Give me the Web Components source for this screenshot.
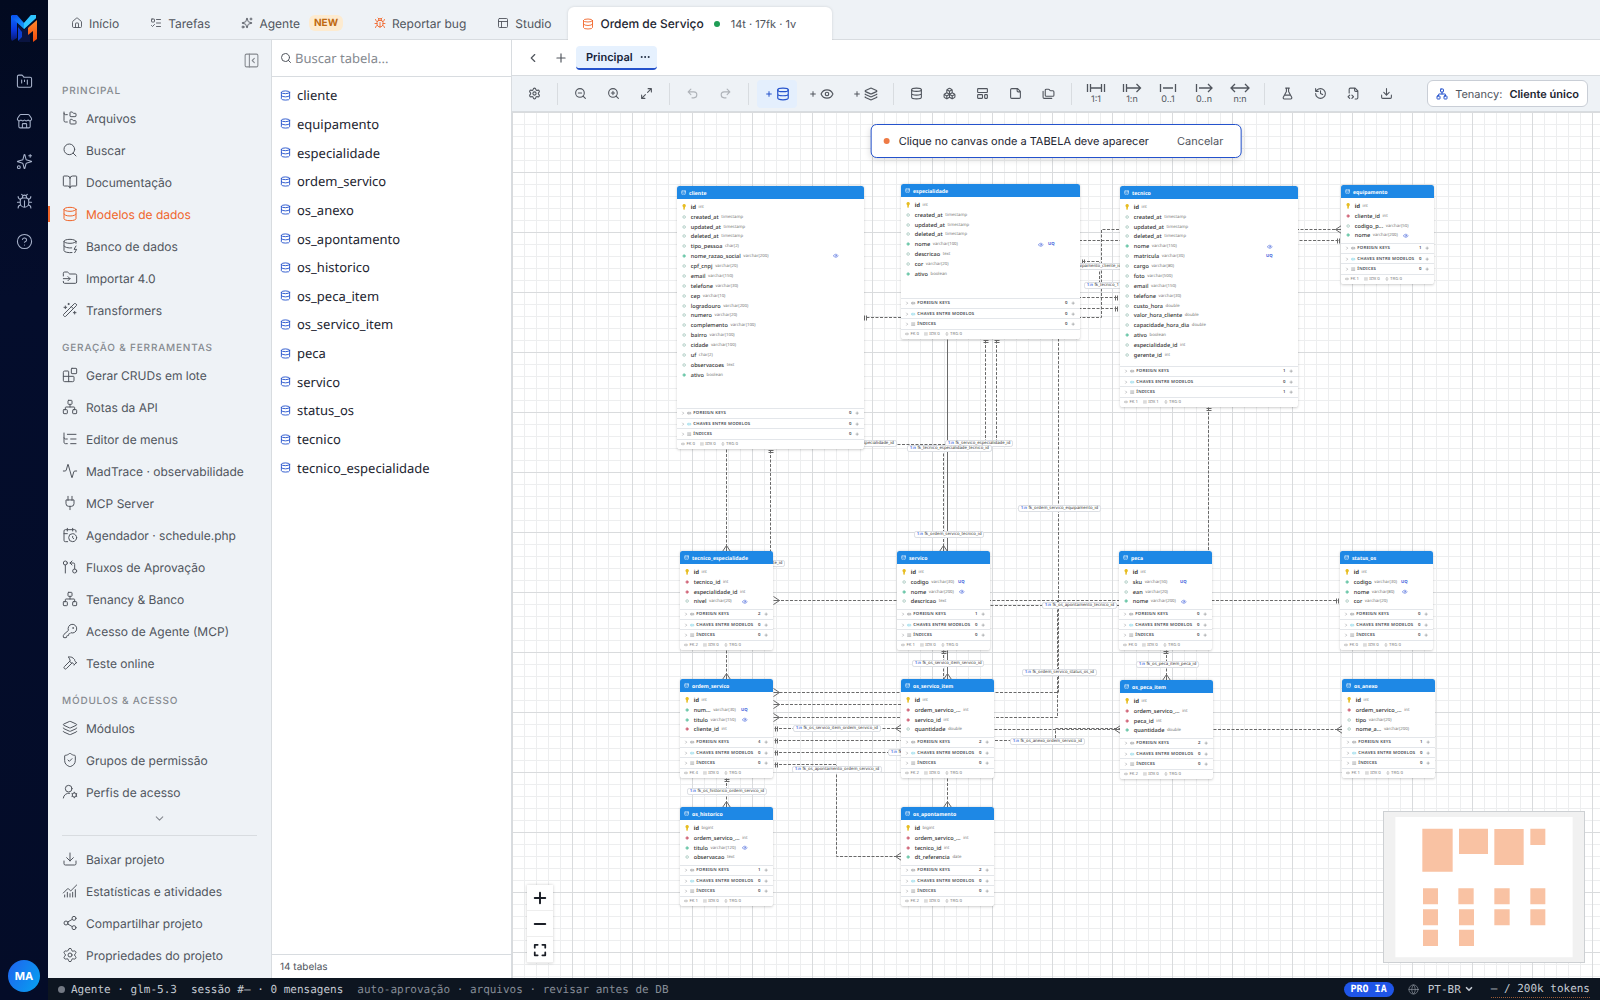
<!DOCTYPE html>
<html lang="pt-BR">
<head>
<meta charset="utf-8">
<title>Ordem de Serviço</title>
<style>
  :root{
    --ui:Inter,"Liberation Sans",sans-serif;
    --data:"Noto Sans","Open Sans",sans-serif;
    --mono:"DejaVu Sans Mono","Liberation Mono",monospace;
    --bg:#eef2f6;--line:#d8dce0;--text:#50555d;--strong:#1c2430;--muted:#85898f;
    --blue:#2452cc;--orange:#f0652a;
  }
  html,body{margin:0;height:100%}
  body{font:12px var(--ui);color:var(--text);background:#fff;text-rendering:geometricPrecision}
</style>
</head>
<body>
<app-shell></app-shell>
<script>
const base = `*{box-sizing:border-box}
button,a,input,select{font:inherit;color:inherit;background:none;border:0;padding:0;margin:0;text-decoration:none;text-rendering:inherit;letter-spacing:inherit}
ul{list-style:none;margin:0;padding:0}`;

function define(name, css, html) {
  const tpl = document.createElement('template');
  customElements.define(name, class extends HTMLElement {
    connectedCallback() {
      if (this.shadowRoot) return;
      tpl.innerHTML = `<style>${base}${css}</style>${typeof html === 'function' ? html(this) : html}`;
      this.attachShadow({mode: 'open'}).append(tpl.content.cloneNode(true));
    }
  });
}

/* ---------- icons ---------- */
const p = d => `<path d="${d}"/>`;
const cyl = '<ellipse cx="12" cy="5" rx="9" ry="3"/>';
const ICONS = {
  home: p('M15 21v-8a1 1 0 0 0-1-1h-4a1 1 0 0 0-1 1v8M3 10a2 2 0 0 1 .709-1.528l7-5.999a2 2 0 0 1 2.582 0l7 5.999A2 2 0 0 1 21 10v9a2 2 0 0 1-2 2H5a2 2 0 0 1-2-2z'),
  todo: '<rect x="3" y="4" width="6" height="6" rx="1"/>' + p('m3 17 2 2 4-4M13 5h8M13 12h8M13 19h8'),
  sparkles: p('M9.937 15.5A2 2 0 0 0 8.5 14.063l-6.135-1.582a.5.5 0 0 1 0-.962L8.5 9.936A2 2 0 0 0 9.937 8.5l1.582-6.135a.5.5 0 0 1 .963 0L14.063 8.5A2 2 0 0 0 15.5 9.937l6.135 1.581a.5.5 0 0 1 0 .964L15.5 14.063a2 2 0 0 0-1.437 1.437l-1.582 6.135a.5.5 0 0 1-.963 0zM20 2v4M22 4h-4') + '<circle cx="4" cy="20" r="2"/>',
  bug: p('m8 2 1.88 1.88M14.12 3.88 16 2M9 7.13v-1a3.003 3.003 0 1 1 6 0v1M12 20c-3.3 0-6-2.7-6-6v-3a4 4 0 0 1 4-4h4a4 4 0 0 1 4 4v3c0 3.3-2.7 6-6 6M12 20v-9M6.53 9C4.6 8.8 3 7.1 3 5M6 13H2M3 21c0-2.1 1.7-3.9 3.8-4M20.97 5c0 2.1-1.6 3.8-3.5 4M22 13h-4M17.2 17c2.1.1 3.8 1.9 3.8 4'),
  panels: '<rect x="3" y="3" width="18" height="18" rx="2"/>' + p('M3 9h18M9 21V9'),
  database: cyl + p('M3 5V19A9 3 0 0 0 21 19V5M3 12A9 3 0 0 0 21 12'),
  kanban: p('M4 20h16a2 2 0 0 0 2-2V8a2 2 0 0 0-2-2h-7.93a2 2 0 0 1-1.66-.9l-.82-1.2A2 2 0 0 0 7.93 3H4a2 2 0 0 0-2 2v13c0 1.1.9 2 2 2ZM8 10v4M12 10v2M16 10v6'),
  store: p('M15 21v-5a1 1 0 0 0-1-1h-4a1 1 0 0 0-1 1v5M17.774 10.31a1.12 1.12 0 0 0-1.549 0 2.5 2.5 0 0 1-3.451 0 1.12 1.12 0 0 0-1.548 0 2.5 2.5 0 0 1-3.452 0 1.12 1.12 0 0 0-1.549 0 2.5 2.5 0 0 1-3.77-3.248l2.889-4.184A2 2 0 0 1 7 2h10a2 2 0 0 1 1.653.873l2.895 4.192a2.5 2.5 0 0 1-3.774 3.244M4 10.95V19a2 2 0 0 0 2 2h12a2 2 0 0 0 2-2v-8.05'),
  help: '<circle cx="12" cy="12" r="10"/>' + p('M9.09 9a3 3 0 0 1 5.83 1c0 2-3 3-3 3M12 17h.01'),
  tree: p('M20 10a1 1 0 0 0 1-1V6a1 1 0 0 0-1-1h-2.5a1 1 0 0 1-.8-.4l-.9-1.2A1 1 0 0 0 15 3h-2a1 1 0 0 0-1 1v5a1 1 0 0 0 1 1ZM20 21a1 1 0 0 0 1-1v-3a1 1 0 0 0-1-1h-2.9a1 1 0 0 1-.88-.55l-.42-.85a1 1 0 0 0-.92-.6H13a1 1 0 0 0-1 1v5a1 1 0 0 0 1 1ZM3 5a2 2 0 0 0 2 2h3M3 3v13a2 2 0 0 0 2 2h3'),
  search: '<circle cx="11" cy="11" r="8"/>' + p('m21 21-4.3-4.3'),
  book: p('M12 7v14M3 18a1 1 0 0 1-1-1V4a1 1 0 0 1 1-1h5a4 4 0 0 1 4 4 4 4 0 0 1 4-4h5a1 1 0 0 1 1 1v13a1 1 0 0 1-1 1h-6a3 3 0 0 0-3 3 3 3 0 0 0-3-3z'),
  dbzap: cyl + p('M3 5V19A9 3 0 0 0 15 21.84M21 5V8M21 12 18 17H22L19 22M3 12A9 3 0 0 0 14.59 14.87'),
  input: p('M2 9V5a2 2 0 0 1 2-2h3.9a2 2 0 0 1 1.69.9l.81 1.2a2 2 0 0 0 1.67.9H20a2 2 0 0 1 2 2v10a2 2 0 0 1-2 2H4a2 2 0 0 1-2-2v-1M2 13h10M9 16l3-3-3-3'),
  wand: p('m21.64 3.64-1.28-1.28a1.21 1.21 0 0 0-1.72 0L2.36 18.64a1.21 1.21 0 0 0 0 1.72l1.28 1.28a1.2 1.2 0 0 0 1.72 0L21.64 5.36a1.2 1.2 0 0 0 0-1.72M14 7l3 3M5 6v4M19 14v4M10 2v2M7 8H3M21 16h-4M11 3H9'),
  blocks: p('M10 22V7a1 1 0 0 0-1-1H4a2 2 0 0 0-2 2v12a2 2 0 0 0 2 2h12a2 2 0 0 0 2-2v-5a1 1 0 0 0-1-1H2') + '<rect x="14" y="2" width="8" height="8" rx="1"/>',
  network: '<rect x="16" y="16" width="6" height="6" rx="1"/><rect x="2" y="16" width="6" height="6" rx="1"/><rect x="9" y="2" width="6" height="6" rx="1"/>' + p('M5 16v-3a1 1 0 0 1 1-1h12a1 1 0 0 1 1 1v3M12 12V8'),
  listtree: p('M21 12h-8M21 5H8M21 19h-8M3 3v7c0 1.1.9 2 2 2h3M3 10v7c0 1.1.9 2 2 2h3'),
  activity: p('M22 12h-2.48a2 2 0 0 0-1.93 1.46l-2.35 8.36a.25.25 0 0 1-.48 0L9.24 2.18a.25.25 0 0 0-.48 0l-2.35 8.36A2 2 0 0 1 4.49 12H2'),
  plug: p('M12 22v-5M9 8V2M15 8V2M18 8v5a4 4 0 0 1-4 4h-4a4 4 0 0 1-4-4V8Z'),
  calendar: p('M21 7.5V6a2 2 0 0 0-2-2H5a2 2 0 0 0-2 2v14a2 2 0 0 0 2 2h3.5M16 2v4M8 2v4M3 10h5M17.5 17.5 16 16.3V14') + '<circle cx="16" cy="16" r="6"/>',
  flow: '<circle cx="5" cy="6" r="3"/><circle cx="19" cy="18" r="3"/>' + p('M5 9v12M15 9l-3-3 3-3M12 6h5a2 2 0 0 1 2 2v7'),
  key: p('M2.586 17.414A2 2 0 0 0 2 18.828V21a1 1 0 0 0 1 1h3a1 1 0 0 0 1-1v-1a1 1 0 0 1 1-1h1a1 1 0 0 0 1-1v-1a1 1 0 0 1 1-1h.172a2 2 0 0 0 1.414-.586l.814-.814a6.5 6.5 0 1 0-4-4z') + '<circle cx="16.5" cy="7.5" r=".5"/>',
  hammer: p('m15 12-8.373 8.373a1 1 0 1 1-3-3L12 9M18 15l4-4M21.5 11.5l-1.914-1.914A2 2 0 0 1 19 8.172V7l-2.26-2.26a6 6 0 0 0-4.202-1.756L9 2.96l.92.82A6.18 6.18 0 0 1 12 8.4V10l2 2h1.172a2 2 0 0 1 1.414.586L18.5 14.5'),
  layers: p('M12.83 2.18a2 2 0 0 0-1.66 0L2.6 6.08a1 1 0 0 0 0 1.83l8.58 3.91a2 2 0 0 0 1.66 0l8.58-3.9a1 1 0 0 0 0-1.83zM2 12a1 1 0 0 0 .58.91l8.6 3.91a2 2 0 0 0 1.65 0l8.58-3.9A1 1 0 0 0 22 12M2 17a1 1 0 0 0 .58.91l8.6 3.91a2 2 0 0 0 1.65 0l8.58-3.9A1 1 0 0 0 22 17'),
  shield: p('M20 13c0 5-3.5 7.5-7.66 8.95a1 1 0 0 1-.67-.01C7.5 20.5 4 18 4 13V6a1 1 0 0 1 1-1c2 0 4.5-1.2 6.24-2.72a1.17 1.17 0 0 1 1.52 0C14.51 3.81 17 5 19 5a1 1 0 0 1 1 1zM9 12l2 2 4-4'),
  usercog: '<circle cx="10" cy="7" r="5"/><circle cx="18.5" cy="16.5" r="3.2"/>' + p('M2 21a8 8 0 0 1 9.5-7.2M18.500 12.300v1M18.500 19.700v1M14.900 14.400l.9.5M21.300 18.100l.9.5M14.900 18.600l.9-.5M21.300 14.900l.9-.5'),
  download: p('M12 15V3M21 15v4a2 2 0 0 1-2 2H5a2 2 0 0 1-2-2v-4M7 10l5 5 5-5'),
  chart: p('M12 16v5M16 14v7M20 10v11M22 3l-8.646 8.646a.5.5 0 0 1-.708 0L9.354 8.354a.5.5 0 0 0-.707 0L2 15M4 18v3M8 14v7'),
  share: '<circle cx="18" cy="5" r="3"/><circle cx="6" cy="12" r="3"/><circle cx="18" cy="19" r="3"/>' + p('m8.59 13.51 6.83 3.98M15.41 6.51l-6.82 3.98'),
  gear: p('M9.671 4.136a2.34 2.34 0 0 1 4.659 0 2.34 2.34 0 0 0 3.319 1.915 2.34 2.34 0 0 1 2.33 4.033 2.34 2.34 0 0 0 0 3.831 2.34 2.34 0 0 1-2.33 4.033 2.34 2.34 0 0 0-3.319 1.915 2.34 2.34 0 0 1-4.659 0 2.34 2.34 0 0 0-3.32-1.915 2.34 2.34 0 0 1-2.33-4.033 2.34 2.34 0 0 0 0-3.831A2.34 2.34 0 0 1 6.35 6.051a2.34 2.34 0 0 0 3.319-1.915') + '<circle cx="12" cy="12" r="3"/>',
  collapse: '<rect x="3" y="3" width="18" height="18" rx="2"/>' + p('M9 3v18M16 15l-3-3 3-3'),
  down: p('m6 9 6 6 6-6'), left: p('m15 18-6-6 6-6'), right: p('m9 18 6-6-6-6'),
  plus: p('M5 12h14M12 5v14'), minus: p('M5 12h14'),
  dots: '<circle cx="12" cy="12" r="1"/><circle cx="19" cy="12" r="1"/><circle cx="5" cy="12" r="1"/>',
  zoomout: '<circle cx="11" cy="11" r="8"/>' + p('m21 21-4.3-4.3M8 11h6'),
  zoomin: '<circle cx="11" cy="11" r="8"/>' + p('m21 21-4.3-4.3M8 11h6M11 8v6'),
  expand: p('M15 3h6v6M9 21H3v-6M21 3l-7 7M3 21l7-7'),
  undo: p('M9 14 4 9l5-5M4 9h10.500a5.500 5.500 0 0 1 0 11H11'),
  redo: p('m15 14 5-5-5-5M20 9H9.500a5.500 5.500 0 0 0 0 11H13'),
  eye: p('M2.062 12.348a1 1 0 0 1 0-.696 10.75 10.75 0 0 1 19.876 0 1 1 0 0 1 0 .696 10.75 10.75 0 0 1-19.876 0') + '<circle cx="12" cy="12" r="3"/>',
  boxes: p('M2.97 12.92A2 2 0 0 0 2 14.63v3.24a2 2 0 0 0 .97 1.71l3 1.8a2 2 0 0 0 2.06 0L12 19v-5.5l-5-3-4.03 2.42ZM7 16.5l-4.74-2.85M7 16.5l5-3M7 16.5v5.17M12 13.5V19l3.97 2.38a2 2 0 0 0 2.06 0l3-1.8a2 2 0 0 0 .97-1.71v-3.24a2 2 0 0 0-.97-1.71L17 10.5l-5 3ZM17 16.5l-5-3M17 16.5l4.74-2.85M17 16.5v5.17M7.97 4.42A2 2 0 0 0 7 6.13v4.37l5 3 5-3V6.13a2 2 0 0 0-.97-1.71l-3-1.8a2 2 0 0 0-2.06 0l-3 1.8ZM12 8 7.26 5.15M12 8l4.74-2.85M12 13.5V8'),
  template: '<rect x="3" y="3" width="18" height="7" rx="1"/><rect x="3" y="14" width="9" height="7" rx="1"/><rect x="16" y="14" width="5" height="7" rx="1"/>',
  note: p('M16 3H5a2 2 0 0 0-2 2v14a2 2 0 0 0 2 2h14a2 2 0 0 0 2-2V8ZM15 3v4a2 2 0 0 0 2 2h4'),
  folders: p('M20 17a2 2 0 0 0 2-2V9a2 2 0 0 0-2-2h-3.9a2 2 0 0 1-1.69-.9l-.81-1.2a2 2 0 0 0-1.67-.9H8a2 2 0 0 0-2 2v9a2 2 0 0 0 2 2ZM2 8v11a2 2 0 0 0 2 2h14'),
  flask: p('M14 2v6a2 2 0 0 0 .245.96l5.51 10.08A2 2 0 0 1 18 22H6a2 2 0 0 1-1.755-2.96l5.51-10.08A2 2 0 0 0 10 8V2M6.453 15h11.094M8.5 2h7'),
  history: p('M3 12a9 9 0 1 0 9-9 9.75 9.75 0 0 0-6.74 2.74L3 8M3 3v5h5M12 7v5l4 2'),
  filecode: p('M4 11V4a2 2 0 0 1 2-2h9l5 5v13a2 2 0 0 1-2 2h-3M14 2v4a2 2 0 0 0 2 2h4M5 15l-3 3 3 3M9 21l3-3-3-3'),
  globe: '<circle cx="12" cy="12" r="10"/>' + p('M12 2a14.5 14.5 0 0 0 0 20 14.5 14.5 0 0 0 0-20M2 12h20'),
  fit: p('M3 8V3h5M16 3h5v5M21 16v5h-5M8 21H3v-5'),
  link: p('M9 17H7A5 5 0 0 1 7 7h2M15 7h2a5 5 0 1 1 0 10h-2M8 12h8'),
  list: p('M3 5h.01M3 12h.01M3 19h.01M8 5h13M8 12h13M8 19h13'),
  bolt: p('M12 3v18M6 9l6-6 6 6M6 15l6 6 6-6')
};
define('ui-icon', `:host{display:inline-flex;flex:none;width:var(--s,16px);height:var(--s,16px)}
svg{width:100%;height:100%;fill:none;stroke:currentColor;stroke-width:var(--w,1.5);stroke-linecap:round;stroke-linejoin:round}`,
  el => `<svg viewBox="0 0 24 24" aria-hidden="true">${ICONS[el.getAttribute('name')]}</svg>`);
const icon = n => `<ui-icon name="${n}"></ui-icon>`;

/* ---------- left rail ---------- */
define('app-rail', `:host{display:flex;flex-direction:column;align-items:center;width:48px;padding:12px 0 8px;background:linear-gradient(#020a20,#040d2c 30%,#040c28);color:#a9b4cc}
.logo{width:28px;height:32px}
nav{display:flex;flex-direction:column;gap:23px;margin-top:29px;flex:1}
a{display:flex;--s:17px}
button{width:32px;height:32px;border-radius:50%;background:linear-gradient(120deg,#1f62ee,#06a3f0);color:#fff;font:700 11px var(--ui)}`,
`<svg class="logo" viewBox="0 0 28 32" aria-label="Mad">
<defs><linearGradient id="a" x1="0" y1="0" x2="0" y2="1"><stop stop-color="#0b6cff"/><stop offset=".6" stop-color="#0a35d8"/><stop offset="1" stop-color="#0a1a70"/></linearGradient>
<linearGradient id="b" x1="0" y1="0" x2="1" y2="1"><stop stop-color="#0a4bf0"/><stop offset="1" stop-color="#19c4ff"/></linearGradient>
<linearGradient id="c" x1="0" y1="0" x2="0" y2="1"><stop stop-color="#ff8a2a"/><stop offset="1" stop-color="#f0480c"/></linearGradient></defs>
<path fill="url(#a)" d="M1 3 7 9v17l-5 3-1-2z"/><path fill="#0a1440" d="m8 12 6 6 6-6v18H9z"/>
<path fill="#0d3fd0" d="m8 15 4 5v5l-4 4z"/>
<path fill="url(#b)" d="M2 3h5l7 8 7-8h5v3L14 17 2 6z"/><path fill="#37d3ff" d="m14 11 7-8h5v3L14 17z" opacity=".8"/>
<path fill="url(#c)" d="m20 14 7-6v19l-4 3v-11l-5 4v-7z"/></svg>
<nav aria-label="Atalhos">${[['kanban', 'Projetos'], ['store', 'Loja'], ['sparkles', 'IA'], ['bug', 'Bugs'], ['help', 'Ajuda']].map(([i, t]) => `<a href="#" aria-label="${t}">${icon(i)}</a>`).join('')}</nav>
<button type="button">MA</button>`);

/* ---------- project tabs ---------- */
define('tab-item', `:host{display:flex;align-items:center;height:32px;padding:0 14px}
:host([active]){background:#fff;border-radius:6px 6px 0 0;box-shadow:0 0 3px #0002;clip-path:inset(-4px -4px 0 -4px);padding-right:36px;color:var(--strong);font-weight:500}
a{display:flex;align-items:center;gap:6px;white-space:nowrap}
ui-icon{--s:12px;--w:1.8;color:var(--ic,inherit)}`,
  el => `<a href="#">${icon(el.getAttribute('icon'))}<slot></slot></a>`);
define('project-tabs', `:host{display:flex;align-items:flex-end;gap:3px;height:40px;padding:0 9px;background:var(--bg);border-bottom:1px solid var(--line)}
.hot{--ic:var(--orange)}
.new{margin-left:3px;padding:2px 5px;border-radius:6px;background:#fdebd0;color:#c06a10;font:700 10px/12px var(--ui)}
i{width:6px;height:6px;border-radius:50%;background:#1f9d55;margin:0 5px 0 4px}
small{font:400 11px var(--ui);color:var(--text)}
tab-item[active]{position:relative;margin-bottom:-1px;height:33px}`,
`<tab-item icon="home">Início</tab-item><tab-item icon="todo">Tarefas</tab-item>
<tab-item icon="sparkles">Agente<span class="new">NEW</span></tab-item>
<tab-item class="hot" icon="bug">Reportar bug</tab-item><tab-item icon="panels">Studio</tab-item>
<tab-item class="hot" icon="database" active>Ordem de Serviço<i></i><small>14t · 17fk · 1v</small></tab-item>`);

/* ---------- side menu ---------- */
define('menu-link', `:host{display:block}
a{display:flex;align-items:center;gap:8px;height:32px;padding-left:14px;white-space:nowrap}
:host([active]) a{color:var(--orange);background:linear-gradient(var(--orange),var(--orange)) 0 50%/2px 16px no-repeat}`,
  el => `<a href="#">${icon(el.getAttribute('icon'))}<slot></slot></a>`);
const links = a => a.map(([i, t, on]) => `<menu-link icon="${i}"${on ? ' active' : ''}>${t}</menu-link>`).join('');
define('side-menu', `:host{display:flex;flex-direction:column;width:224px;background:var(--bg);border-right:1px solid var(--line)}
.top{display:flex;justify-content:flex-end;padding:12px 11px 0 0;color:var(--muted)}
.top button{display:flex;--s:17px}
h2{margin:0;padding:15px 14px 3px;font:500 10px/15px var(--ui);letter-spacing:.08em;color:var(--muted)}
nav{flex:1}
.more{display:flex;width:100%;justify-content:center;padding-top:4px;--s:13px;--w:2;color:var(--muted)}
.foot{margin:0 14px;border-top:1px solid var(--line);height:8px}
.end{padding-bottom:7px}`,
`<div class="top"><button type="button" aria-label="Recolher menu">${icon('collapse')}</button></div>
<nav><h2>PRINCIPAL</h2>${links([['tree', 'Arquivos'], ['search', 'Buscar'], ['book', 'Documentação'], ['database', 'Modelos de dados', 1], ['dbzap', 'Banco de dados'], ['input', 'Importar 4.0'], ['wand', 'Transformers']])}
<h2>GERAÇÃO &amp; FERRAMENTAS</h2>${links([['blocks', 'Gerar CRUDs em lote'], ['network', 'Rotas da API'], ['listtree', 'Editor de menus'], ['activity', 'MadTrace · observabilidade'], ['plug', 'MCP Server'], ['calendar', 'Agendador · schedule.php'], ['flow', 'Fluxos de Aprovação'], ['network', 'Tenancy &amp; Banco'], ['key', 'Acesso de Agente (MCP)'], ['hammer', 'Teste online']])}
<h2>MÓDULOS &amp; ACESSO</h2>${links([['layers', 'Módulos'], ['shield', 'Grupos de permissão'], ['usercog', 'Perfis de acesso']])}
<button class="more" type="button" aria-label="Mais itens">${icon('down')}</button></nav>
<div class="foot"></div><div class="end">${links([['download', 'Baixar projeto'], ['chart', 'Estatísticas e atividades'], ['share', 'Compartilhar projeto'], ['gear', 'Propriedades do projeto']])}</div>`);

/* ---------- table list ---------- */
const NAMES = 'cliente equipamento especialidade ordem_servico os_anexo os_apontamento os_historico os_peca_item os_servico_item peca servico status_os tecnico tecnico_especialidade'.split(' ');
define('table-list', `:host{display:flex;flex-direction:column;width:240px;background:#fff;border-right:1px solid var(--line);font:13px var(--data);color:var(--strong)}
label{display:flex;align-items:center;gap:3px;height:37px;padding:0 8px;border-bottom:1px solid var(--line);color:var(--text);--s:12px;--w:2}
input{flex:1;min-width:0;outline:0}
input::placeholder{color:var(--muted);opacity:1}
ul{display:grid;grid-auto-rows:1fr;height:401px;margin-top:4px}
li{display:flex}
li button{display:flex;align-items:center;gap:6px;width:100%;padding:0 8px;--s:11px;--w:2}
ui-icon{color:var(--blue)} label ui-icon{color:inherit}
footer{height:24px;margin-top:auto;padding:0 8px;border-top:1px solid var(--line);font:10px/24px var(--ui);color:var(--text)}`,
`<label>${icon('search')}<input type="search" aria-label="Buscar tabela" placeholder="Buscar tabela..."></label>
<ul>${NAMES.map(n => `<li><button type="button">${icon('database')}${n}</button></li>`).join('')}</ul>
<footer>14 tabelas</footer>`);

/* ---------- diagram views and toolbar ---------- */
define('view-tabs', `:host{display:flex;align-items:center;height:36px;padding:0 7px;background:#fff;border-bottom:1px solid var(--line)}
button{display:flex;align-items:center;justify-content:center}
.sq{width:28px;height:28px;--s:14px;--w:2}
.tab{gap:6px;height:24px;margin-left:1px;padding:0 6px 0 10px;border-radius:4px;border-bottom:2px solid var(--blue);background:#e6f1fe;color:#16233a;font:600 11px var(--ui);--s:12px;--w:2}`,
`<button class="sq" type="button" aria-label="Anterior">${icon('left')}</button><button class="sq" type="button" aria-label="Nova visão">${icon('plus')}</button>
<button class="tab" type="button">Principal${icon('dots')}</button>`);

const rel = d => `<svg viewBox="0 0 20 10" aria-hidden="true"><path d="${d}"/></svg>`;
const RELS = [['1:1', 'M1.500 1v8M4.500 1v8M4.500 5h11M15.500 1v8M18.500 1v8'], ['1:n', 'M1.500 1v8M4.500 1v8M4.500 5h14M14.500 1l4 4-4 4'], ['0..1', 'M2.500 1v8M5 5h10M17.500 1v8'], ['0..n', 'M2.500 1v8M5 5h13M14 1l4 4-4 4'], ['n:n', 'M1 5h18M5 1 1 5l4 4M15 1l4 4-4 4']];
const tb = (i, t, c = '') => `<button type="button" class="${c}" aria-label="${t}">${icon(i)}</button>`;
const add = (i, t, c = '') => `<button type="button" class="add ${c}" aria-label="${t}"><ui-icon class="p" name="plus"></ui-icon>${icon(i)}</button>`;
define('diagram-toolbar', `:host{display:flex;align-items:center;height:36px;padding:0 12px 0 6px;background:var(--bg);border-bottom:1px solid var(--line)}
button{display:flex;align-items:center;justify-content:center;width:33px;height:28px;--s:13px;--w:2}
hr{width:1px;height:22px;margin:0 6px;border:0;background:var(--line)}
.off{opacity:.4}
.add{width:40px;margin:0 2px;gap:3px;border-radius:4px}
.add ui-icon{--s:14px}.add ui-icon.p{--s:8px;--w:3}
.on{background:#e4effd;color:var(--blue)}
.rel{flex-direction:column;width:36px;font:9px/11px var(--ui);gap:1px}
.rel svg{width:20px;height:10px;fill:none;stroke:currentColor;stroke-width:1.3}
.ten{width:auto;height:27px;margin-left:auto;padding:0 8px;gap:7px;border:1px solid #c9ced6;border-radius:6px;background:#fff;font:11px var(--ui);--s:12px}
.ten ui-icon{color:var(--blue)} b{font-weight:600;color:var(--strong)}`,
`${tb('gear', 'Configurar')}<hr>${tb('zoomout', 'Diminuir')}${tb('zoomin', 'Aumentar')}${tb('expand', 'Ajustar')}<hr>
${tb('undo', 'Desfazer', 'off')}${tb('redo', 'Refazer', 'off')}<hr>${add('database', 'Nova tabela', 'on')}${add('eye', 'Nova view')}${add('layers', 'Novo grupo')}<hr>
${tb('database', 'Banco')}${tb('boxes', 'Módulos')}${tb('template', 'Layout')}${tb('note', 'Nota')}${tb('folders', 'Modelos')}<hr>
${RELS.map(([t, d]) => `<button type="button" class="rel">${rel(d)}<span>${t}</span></button>`).join('')}<hr>
${tb('flask', 'Testar')}${tb('history', 'Histórico')}${tb('filecode', 'Gerar código')}${tb('download', 'Exportar')}
<button type="button" class="ten">${icon('network')}<span>Tenancy:</span><b>Cliente único</b></button>`);

/* ---------- ER tables: fields are "kind name type badges" ---------- */
const T = {
  cliente: {at: [677, 186, 187, 263], n: [0, 0, 0], f: 'k id int|o created_at timestamp|o updated_at timestamp|o deleted_at timestamp|o tipo_pessoa char(2)|g nome_razao_social varchar(200) eye|o cpf_cnpj varchar(20)|o email varchar(150)|o telefone varchar(30)|o cep varchar(10)|o logradouro varchar(200)|o numero varchar(20)|o complemento varchar(100)|o bairro varchar(100)|o cidade varchar(100)|o uf char(2)|o observacoes text|g ativo boolean'},
  especialidade: {at: [901, 184, 179, 155], n: [0, 0, 0], f: 'k id int|o created_at timestamp|o updated_at timestamp|o deleted_at timestamp|g nome varchar(100) eye UQ|o descricao text|o cor varchar(20)|g ativo boolean'},
  tecnico: {at: [1120, 186, 178, 221], n: [1, 0, 1], f: 'k id int|o created_at timestamp|o updated_at timestamp|o deleted_at timestamp|g nome varchar(150) eye|o matricula varchar(30) UQ|o cargo varchar(80)|o foto varchar(500)|o email varchar(150)|o telefone varchar(30)|o custo_hora double|o valor_hora_cliente double|o capacidade_hora_dia double|g ativo boolean|o especialidade_id int|o gerente_id int'},
  equipamento: {at: [1341, 185, 93, 99], n: [1, 0, 0], f: 'k id int|r cliente_id int|o codigo_p... varchar(50)|g nome varchar(200) eye'},
  tecnico_especialidade: {at: [680, 551, 93, 99], n: [2, 0, 0], f: 'k id int|r tecnico_id int|r especialidade_id int|o nivel varchar(20) eye'},
  servico: {at: [897, 551, 93, 99], n: [1, 0, 0], f: 'k id int|o codigo varchar(30) UQ|g nome varchar(200) eye|o descricao text'},
  peca: {at: [1119, 551, 93, 99], n: [0, 0, 0], f: 'k id int|o sku varchar(50) UQ|o ean varchar(20)|g nome varchar(200) eye'},
  status_os: {at: [1340, 551, 93, 99], n: [0, 0, 0], f: 'k id int|g codigo varchar(30) UQ|g nome varchar(80) eye|o cor varchar(20)'},
  ordem_servico: {at: [680, 679, 93, 99], n: [4, 0, 0], f: 'k id int|g num... varchar(30) UQ|g titulo varchar(150) eye|r cliente_id int'},
  os_servico_item: {at: [901, 679, 93, 99], n: [2, 0, 0], f: 'k id int|r ordem_servico_... int|r servico_id int|o quantidade double'},
  os_peca_item: {at: [1120, 680, 93, 99], n: [2, 0, 0], f: 'k id int|r ordem_servico_... int|r peca_id int|g quantidade double'},
  os_anexo: {at: [1342, 679, 93, 99], n: [1, 0, 0], f: 'k id int|r ordem_servico_... int|o tipo varchar(20)|o nome_a... varchar(200)'},
  os_historico: {at: [680, 807, 93, 99], n: [1, 0, 0], f: 'k id bigint|r ordem_servico_... int|g titulo varchar(120) eye|o observacao text'},
  os_apontamento: {at: [901, 807, 93, 99], n: [2, 0, 0], f: 'k id bigint|r ordem_servico_... int|r tecnico_id int|g dt_referencia date'}
};
const mark = {
  k: '<svg viewBox="0 0 10 14"><path fill="#e7bd22" d="M5 0a4 4 0 0 1 2 7.400V9L6 10l1 1-1 1v1l-1 1-2-2V7.400A4 4 0 0 1 5 0z"/></svg>',
  o: '<svg viewBox="0 0 10 10"><circle cx="5" cy="5" r="3" fill="#fff" stroke="#8fb9ac" stroke-width="1.500"/></svg>',
  g: '<svg viewBox="0 0 10 10"><circle cx="5" cy="5" r="3" fill="#5cc3a0" stroke="#8fd3bd" stroke-width="2"/></svg>',
  r: '<svg viewBox="0 0 10 10"><circle cx="5" cy="5" r="3" fill="#cc4a62" stroke="#dd95a3" stroke-width="2"/></svg>'
};
define('er-table', `:host{position:absolute;display:block}
section{zoom:.43;display:flex;flex-direction:column;width:100%;height:100%;overflow:hidden;background:#fff;border-radius:6px;box-shadow:0 1px 6px #0003;font:13px var(--data);color:#333}
h3{display:flex;align-items:center;gap:6px;height:31px;flex:none;margin:0;padding:0 10px;background:#1e88e5;color:#fff;font:700 12px var(--data);--s:12px;--w:2}
ul{flex:1;padding-top:6px}
li{display:flex;align-items:center;gap:6px;height:23px;padding:0 59px 0 12px;white-space:nowrap}
li>svg{width:10px;height:14px;margin-right:4px;flex:none}
li small{font-size:10px;color:#777} .k b{font-weight:700} b{font-weight:500}
.tag{display:flex;align-items:center;gap:10px;margin-left:auto;color:#3f5fdc;font:700 10px var(--data);--s:13px;--w:2}
.sec{display:flex;align-items:center;gap:4px;height:24px;flex:none;width:100%;padding:0 10px;border-top:1px solid #e3e6ea;font:600 10px var(--data);letter-spacing:.05em;color:#4c4f55;white-space:nowrap;--s:10px;--w:2}
.sec .n{margin-left:auto;margin-right:5px;letter-spacing:0}
.cyan{color:#32b8d8}
footer{display:flex;gap:12px;height:24px;flex:none;padding:0 10px;align-items:center;border-top:1px solid #e3e6ea;font:10px var(--data);color:#777;--s:9px;--w:2}
footer span{display:flex;align-items:center;gap:3px;white-space:nowrap}`,
  el => {
    const name = el.getAttribute('name'), t = T[name];
    const row = r => {
      const [k, n, ty, ...b] = r.split(' ');
      return `<li class="${k}">${mark[k]}<b>${n}</b><small>${ty}</small>${b.length ? `<span class="tag">${b.map(x => x === 'eye' ? icon('eye') : x).join('')}</span>` : ''}</li>`;
    };
    const sec = (i, c, s, n) => `<button type="button" class="sec">${icon('right')}<ui-icon name="${i}" class="${c}"></ui-icon>${s}<span class="n">${n}</span>${icon('plus')}</button>`;
    return `<section><h3>${icon('database')}${name}</h3><ul>${t.f.split('|').map(row).join('')}</ul>
${sec('link', '', 'FOREIGN KEYS', t.n[0])}${sec('link', 'cyan', 'CHAVES ENTRE MODELOS', t.n[1])}${sec('list', '', 'ÍNDICES', t.n[2])}
<footer><span>${icon('link')}FK ${t.n[0]}</span><span>${icon('list')}IDX ${t.n[2]}</span><span>${icon('bolt')}TRG 0</span></footer></section>`;
  });

/* ---------- relation lines ---------- */
const LINES = ['M866 317H1101V229H1341', 'M1338 240H1058V692H776', 'M1082 261H1099V282', 'M947 297H1118', 'M943 308H1118',
  'M985 340V444H863', 'M996 340V444', 'M943 444V551', 'M726 449V551', 'M770 450V563', 'M776 600H1058', 'M1058 600H1338', 'M990 605H1119',
  'M1057 600V717H776', 'M776 704H901', 'M774 728H901', 'M774 740H1055V729', 'M774 752H901', 'M774 764H836V856H901',
  'M994 729H1120', 'M1055 728H1120', 'M1213 729H1342', 'M726 650V679', 'M726 778V807', 'M943 650V679', 'M947 778V807', 'M1208 407V551', 'M1166 650V680'];
const FEET = [[1341, 229, 'l'], [726, 551, 't'], [943, 551, 't'], [773, 600, 'r'], [726, 679, 't'], [947, 679, 't'], [773, 692, 'r'], [773, 704, 'r'], [773, 717, 'r'],
  [901, 728, 'l'], [901, 856, 'l'], [1120, 729, 'l'], [1342, 729, 'l'], [1166, 680, 't'], [726, 807, 't'], [947, 807, 't']];
const BARS = [[865, 317, 'v'], [1338, 240, 'v'], [1083, 261, 'v'], [1116, 297, 'v'], [1116, 308, 'v'], [1337, 600, 'v'], [776, 728, 'v'], [776, 740, 'v'], [776, 752, 'v'], [776, 764, 'v'],
  [985, 340, 'h'], [996, 340, 'h'], [770, 450, 'h'], [943, 651, 'h'], [726, 779, 'h'], [1208, 408, 'h'], [1165, 651, 'h']];
const foot = ([x, y, d]) => d === 't' ? `M${x} ${y - 6}l-4 6M${x} ${y - 6}v6M${x} ${y - 6}l4 6` : d === 'r' ? `M${x + 6} ${y}l-6-4M${x + 6} ${y}h-6M${x + 6} ${y}l-6 4` : `M${x - 6} ${y}l6-4M${x - 6} ${y}h6M${x - 6} ${y}l6 4`;
const bar = ([x, y, d]) => d === 'v' ? `M${x - 1} ${y - 2}v5M${x + 1} ${y - 2}v5` : `M${x - 2} ${y}h5M${x - 2} ${y + 2}h5`;
define('er-edges', `:host{position:absolute;inset:0}svg{display:block;width:100%;height:100%;fill:none;stroke:#6a6a6a;stroke-width:1}`,
`<svg aria-hidden="true"><g transform="translate(-511.5 -111.5)"><path stroke-dasharray="3 1.5" d="${LINES.join('')}"/>
<path d="M947 339V551M947 650V679"/><path d="${FEET.map(foot).join('')}${BARS.map(bar).join('')}"/></g></svg>`);

define('er-label', `:host{position:absolute;display:block}
span{zoom:.43;display:flex;align-items:center;gap:3px;height:16px;padding:0 4px;border:1px solid #dcdfe4;border-radius:5px;background:#fff;font:10px var(--data);color:#333;white-space:nowrap}
b{color:#3f5fdc;font-weight:600}`, `<span><b>1:n</b><slot></slot></span>`);
const LABELS = [[1057, 263, 'fk_equipamento_cliente_id'], [1084, 282, 'fk_tecnico_1'], [799, 440, 'fk_tecnico_especialidade_especialidade_id'], [945, 440, 'fk_servico_especialidade_id'], [907, 445, 'fk_tecnico_especialidade_tecnico_id'],
  [1018, 505, 'fk_ordem_servico_equipamento_id'], [914, 531, 'fk_ordem_servico_tecnico_id'], [716, 560, 'fk_ordem_servico_cliente_id'], [1042, 602, 'fk_os_apontamento_tecnico_id'],
  [912, 660, 'fk_os_servico_item_servico_id'], [1136, 661, 'fk_os_peca_item_peca_id'], [1022, 669, 'fk_ordem_servico_status_os_id'], [793, 725, 'fk_os_servico_item_ordem_servico_id'], [1010, 738, 'fk_os_anexo_ordem_servico_id'],
  [888, 749, 'fk_os_peca_item_ordem_servico_id'], [792, 766, 'fk_os_apontamento_ordem_servico_id'], [687, 788, 'fk_os_historico_ordem_servico_id']];

define('mini-map', `:host{display:block;border:1px solid #cdd0d3;background:#f1f1f1}svg{display:block}`,
`<svg width="200" height="150" viewBox="852 65 600 450" aria-label="Mini mapa"><path fill="#fff" d="M886 80h532v421H886z"/><path fill="#f9c2a3" d="M967 115h91v129h-91zM1077 115h87v76h-87zM1183 116h88v108h-88zM1291 115h45v49h-45zM969 294h45v48h-45zM1075 294h46v48h-46zM1183 294h46v48h-46zM1291 294h45v48h-45zM969 357h45v48h-45zM1077 357h45v48h-45zM1183 357h46v48h-46zM1291 357h45v48h-45zM969 418h45v49h-45zM1077 418h45v49h-45z"/></svg>`);

define('zoom-controls', `:host{display:flex;flex-direction:column;box-shadow:0 0 3px #0003;background:#fff}
button{display:flex;align-items:center;justify-content:center;width:26px;height:26px;border-bottom:1px solid #eee;color:#1b1f27;--s:18px;--w:2.6}
.fit{--s:14px;--w:3}`,
`<button type="button" aria-label="Aumentar zoom">${icon('plus')}</button><button type="button" aria-label="Diminuir zoom">${icon('minus')}</button><button class="fit" type="button" aria-label="Enquadrar"><ui-icon name="fit"></ui-icon></button>`);

define('place-hint', `:host{display:flex;align-items:center;height:34px;padding:0 17px 0 12px;border:1px solid var(--blue);border-radius:6px;background:#fff;box-shadow:0 2px 6px #0002;font:11px var(--ui);color:var(--strong);white-space:nowrap}
i{width:6px;height:6px;border-radius:50%;background:#ee7a45;margin-right:9px}
button{margin-left:28px;font-size:11px;color:var(--text)}`,
`<i></i>Clique no canvas onde a TABELA deve aparecer<button type="button">Cancelar</button>`);

define('er-canvas', `:host{position:relative;display:block;flex:1;overflow:hidden;background-color:#fff;
background-image:linear-gradient(90deg,#d9dbdd 1px,transparent 1px),linear-gradient(#d9dbdd 1px,transparent 1px),linear-gradient(90deg,#edeeef 1px,transparent 1px),linear-gradient(#edeeef 1px,transparent 1px);
background-size:60px 60px,60px 60px,12px 12px,12px 12px}
place-hint{position:absolute;top:12px;left:50%;transform:translateX(-50%)}
zoom-controls{position:absolute;left:15px;bottom:15px}
mini-map{position:absolute;right:15px;bottom:15px}`,
`<er-edges></er-edges>${LABELS.map(([x, y, t]) => `<er-label style="left:${x - 512}px;top:${y - 112}px">${t}</er-label>`).join('')}
${Object.entries(T).map(([n, {at: [x, y, w, h]}]) => `<er-table name="${n}" style="left:${x - 512}px;top:${y - 112}px;width:${w}px;height:${h}px"></er-table>`).join('')}
<place-hint></place-hint><zoom-controls></zoom-controls><mini-map></mini-map>`);

/* ---------- status bar ---------- */
define('status-bar', `:host{display:flex;align-items:center;gap:14px;height:22px;padding:0 10px;background:#0d1520;color:#c3c9d1;font:11px var(--mono);white-space:nowrap}
.ag{display:flex;align-items:center;gap:6px}.ag i{width:7px;height:7px;border-radius:50%;background:#737983}
.dim{color:#858c96}
.pro{margin-left:auto;padding:0 7px;border-radius:8px;background:#1f55e8;color:#fff;font:700 10px/15px var(--mono)}
label{display:flex;align-items:center;--s:11px}
label>:first-child{margin-right:9px;color:#8b929c}
select{appearance:none;width:36px;outline:0}
label>:last-child{--w:4;--s:10px}
.tok{border-bottom:1px dotted #9a5a35;line-height:16px;margin-left:3px}`,
`<span class="ag"><i></i>Agente · glm-5.3</span><span>sessão #— · 0 mensagens</span><span class="dim">auto-aprovação · arquivos · revisar antes de DB</span>
<span class="pro">PRO IA</span><label>${icon('globe')}<select aria-label="Idioma"><option>PT-BR</option></select>${icon('down')}</label><span class="tok">— / 200k tokens</span>`);

define('app-shell', `:host{display:flex;height:100vh;overflow:hidden}
.app,.main{display:flex;flex-direction:column;flex:1;min-width:0}
.work{display:flex;flex:1;min-height:0}
app-rail,side-menu,table-list{flex:none}`,
`<app-rail></app-rail><div class="app"><project-tabs></project-tabs>
<div class="work"><side-menu></side-menu><table-list></table-list>
<div class="main"><view-tabs></view-tabs><diagram-toolbar></diagram-toolbar><er-canvas></er-canvas></div></div>
<status-bar></status-bar></div>`);
</script>
</body>
</html>
